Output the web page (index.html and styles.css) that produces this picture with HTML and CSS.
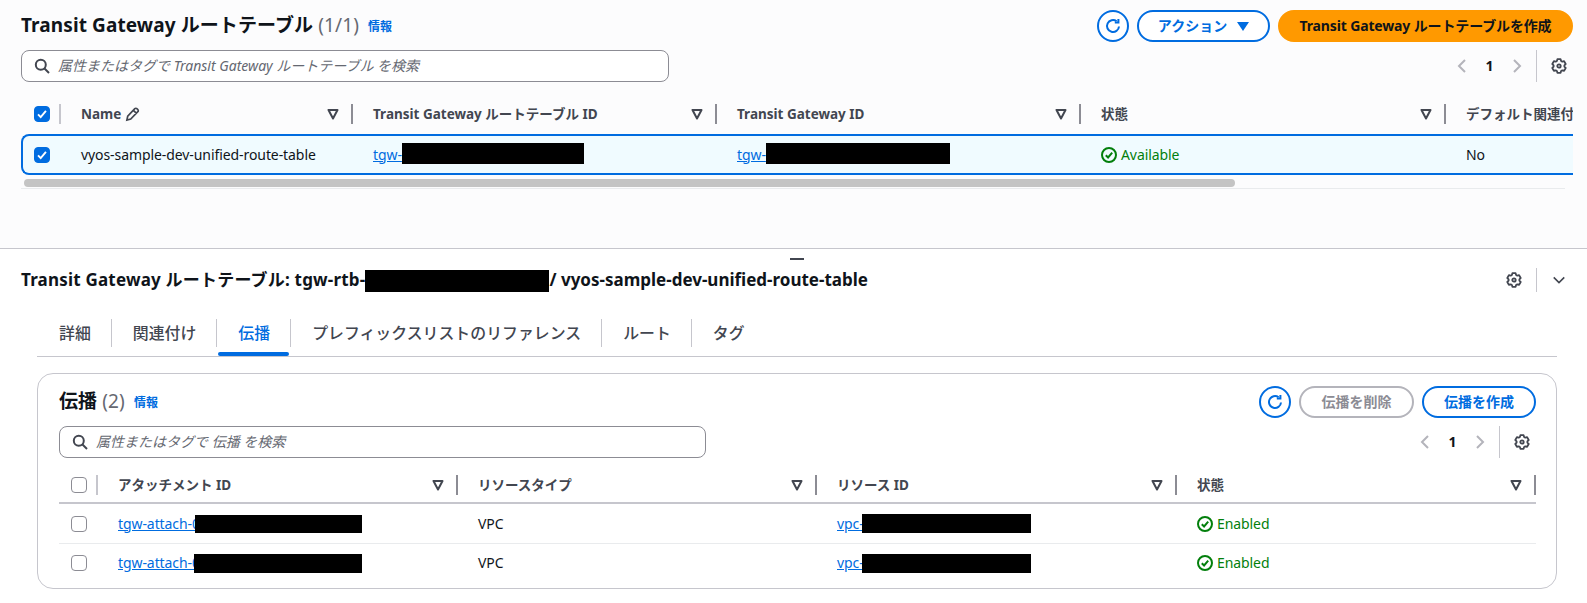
FILE: index.html
```html
<!DOCTYPE html>
<html lang="ja">
<head>
<meta charset="utf-8">
<title>Transit Gateway ルートテーブル</title>
<link rel="stylesheet" href="styles.css">
</head>
<body>
<svg class="defs" width="0" height="0" aria-hidden="true">
  <symbol id="i-refresh" viewBox="0 0 16 16"><path d="M14 8.5A6 6 0 1 1 11.6 3.2" fill="none" stroke="currentColor" stroke-width="2"/><path d="M13.4 .9v3.6H9.8" fill="none" stroke="currentColor" stroke-width="2"/></symbol>
  <symbol id="i-gear" viewBox="0 0 16 16"><path d="M6.4 1.2h3.2l.5 1.8 1.2.7 1.8-.5 1.6 2.8-1.3 1.3v1.4l1.3 1.3-1.6 2.8-1.8-.5-1.2.7-.5 1.8H6.4l-.5-1.8-1.2-.7-1.8.5-1.6-2.8 1.3-1.3V7.3L1.300 6 2.900 3.200l1.800.5 1.200-.7z" fill="none" stroke="currentColor" stroke-width="1.8" stroke-linejoin="round"/><circle cx="8" cy="8" r="1.700" fill="none" stroke="currentColor" stroke-width="1.800"/></symbol>
  <symbol id="i-search" viewBox="0 0 16 16"><circle cx="6.800" cy="6.800" r="5" fill="none" stroke="currentColor" stroke-width="2"/><path d="M10.500 10.500l4.500 4.500" fill="none" stroke="currentColor" stroke-width="2"/></symbol>
  <symbol id="i-filter" viewBox="0 0 12 12"><path d="M1.500 2h9L6 10.500z" fill="none" stroke="currentColor" stroke-width="2" stroke-linejoin="round"/></symbol>
  <symbol id="i-check" viewBox="0 0 16 16"><circle cx="8" cy="8" r="7" fill="none" stroke="currentColor" stroke-width="2"/><path d="M4.800 8.200l2.300 2.300 4.100-4.800" fill="none" stroke="currentColor" stroke-width="2"/></symbol>
  <symbol id="i-pencil" viewBox="0 0 16 16"><path d="M2 14l.9-4.300 7.600-7.900a1.500 1.500 0 0 1 2.200 0l1 1a1.500 1.500 0 0 1 0 2.200l-7.600 7.800zM9 3.500l3.500 3.500" fill="none" stroke="currentColor" stroke-width="1.800"/></symbol>
  <symbol id="i-tick" viewBox="0 0 16 16"><path d="M3.500 8.500l3 3 6-7" fill="none" stroke="currentColor" stroke-width="2.200"/></symbol>
</svg>

<section class="top">
  <div class="head">
    <h1 class="title">Transit Gateway ルートテーブル <span class="count">(1/1)</span> <a class="info">情報</a></h1>
    <div class="actions">
      <button class="btn round"><svg class="ic16"><use href="#i-refresh"/></svg></button>
      <button class="btn action">アクション<span class="caret"></span></button>
      <button class="btn primary">Transit Gateway ルートテーブルを作成</button>
    </div>
  </div>
  <div class="toolbar">
    <div class="search search-top"><svg class="ic16"><use href="#i-search"/></svg><span>属性またはタグで Transit Gateway ルートテーブル を検索</span></div>
    <div class="pager">
      <svg class="chev" viewBox="0 0 10 16"><path d="M8 2L2 8l6 6"/></svg><b>1</b><svg class="chev" viewBox="0 0 10 16"><path d="M2 2l6 6-6 6"/></svg>
      <span class="vsep"></span><svg class="ic16 gear"><use href="#i-gear"/></svg>
    </div>
  </div>
  <div class="clip">
    <div class="grid grid-top ghead">
      <div class="cell"><span class="cb on"><svg><use href="#i-tick"/></svg></span></div>
      <div class="cell th"><span class="name">Name <svg class="ic14"><use href="#i-pencil"/></svg></span><svg class="flt"><use href="#i-filter"/></svg></div>
      <div class="cell th"><span>Transit Gateway ルートテーブル ID</span><svg class="flt"><use href="#i-filter"/></svg></div>
      <div class="cell th"><span>Transit Gateway ID</span><svg class="flt"><use href="#i-filter"/></svg></div>
      <div class="cell th"><span>状態</span><svg class="flt"><use href="#i-filter"/></svg></div>
      <div class="cell th last"><span>デフォルト関連付け</span></div>
    </div>
    <div class="grid grid-sel selrow">
      <div class="cell"><span class="cb on"><svg><use href="#i-tick"/></svg></span></div>
      <div class="cell td">vyos-sample-dev-unified-route-table</div>
      <div class="cell td"><a class="lnk">tgw-</a><span class="mask m-top"></span></div>
      <div class="cell td"><a class="lnk">tgw-</a><span class="mask m-top m-top2"></span></div>
      <div class="cell td ok"><svg class="ic16"><use href="#i-check"/></svg>Available</div>
      <div class="cell td">No</div>
    </div>
  </div>
  <div class="scrolltrack"><div class="thumb"></div></div>
</section>

<section class="bottom">
  <span class="handle"></span>
  <div class="dhead">
    <h2 class="dtitle">Transit Gateway ルートテーブル: tgw-rtb-<span class="mask m-title"></span><span class="dname">/ vyos-sample-dev-unified-route-table</span></h2>
    <div class="dtools"><svg class="ic16 gear"><use href="#i-gear"/></svg><span class="vsep short"></span><svg class="chev dark" viewBox="0 0 16 10"><path d="M2 2l6 6 6-6"/></svg></div>
  </div>
  <nav class="tabs">
    <a class="tab">詳細</a>
    <a class="tab">関連付け</a>
    <a class="tab active">伝播</a>
    <a class="tab">プレフィックスリストのリファレンス</a>
    <a class="tab">ルート</a>
    <a class="tab">タグ</a>
  </nav>
  <div class="card">
    <div class="head card-head">
      <h2 class="title">伝播 <span class="count">(2)</span> <a class="info">情報</a></h2>
      <div class="actions">
        <button class="btn round"><svg class="ic16"><use href="#i-refresh"/></svg></button>
        <button class="btn disabled">伝播を削除</button>
        <button class="btn normal">伝播を作成</button>
      </div>
    </div>
    <div class="toolbar toolbar-card">
      <div class="search search-card"><svg class="ic16"><use href="#i-search"/></svg><span>属性またはタグで 伝播 を検索</span></div>
      <div class="pager">
        <svg class="chev" viewBox="0 0 10 16"><path d="M8 2L2 8l6 6"/></svg><b>1</b><svg class="chev" viewBox="0 0 10 16"><path d="M2 2l6 6-6 6"/></svg>
        <span class="vsep"></span><svg class="ic16 gear"><use href="#i-gear"/></svg>
      </div>
    </div>
    <div class="grid grid-card ghead-card">
      <div class="cell"><span class="cb"></span></div>
      <div class="cell th"><span>アタッチメント ID</span><svg class="flt"><use href="#i-filter"/></svg></div>
      <div class="cell th"><span>リソースタイプ</span><svg class="flt"><use href="#i-filter"/></svg></div>
      <div class="cell th"><span>リソース ID</span><svg class="flt"><use href="#i-filter"/></svg></div>
      <div class="cell th"><span>状態</span><svg class="flt"><use href="#i-filter"/></svg></div>
    </div>
    <div class="grid grid-card row">
      <div class="cell"><span class="cb"></span></div>
      <div class="cell td"><a class="lnk">tgw-attach-0</a><span class="mask m-att"></span></div>
      <div class="cell td">VPC</div>
      <div class="cell td"><a class="lnk">vpc-</a><span class="mask m-vpc"></span></div>
      <div class="cell td ok"><svg class="ic16"><use href="#i-check"/></svg>Enabled</div>
    </div>
    <div class="grid grid-card row rowlast">
      <div class="cell"><span class="cb"></span></div>
      <div class="cell td"><a class="lnk">tgw-attach-0</a><span class="mask m-att m-att2"></span></div>
      <div class="cell td">VPC</div>
      <div class="cell td"><a class="lnk">vpc-</a><span class="mask m-vpc"></span></div>
      <div class="cell td ok"><svg class="ic16"><use href="#i-check"/></svg>Enabled</div>
    </div>
  </div>
</section>
</body>
</html>
```

FILE: styles.css
```css
* { box-sizing: border-box; }
html, body { margin: 0; padding: 0; }
body {
  width: 1587px;
  height: 603px;
  overflow: hidden;
  background: #fff;
  color: #0f141a;
  font-family: "Noto Sans", "Noto Sans CJK JP", sans-serif;
  font-size: 14px;
  line-height: 20px;
}
.defs { position: absolute; }
h1, h2 { margin: 0; }
svg { display: block; flex: none; }
.ic16 { width: 16px; height: 16px; }
.ic14 { width: 15px; height: 15px; display: inline-block; margin-left: 1px; }

.top {
  height: 249px;
  background: #fcfcfd;
  border-bottom: 1px solid #c6c6cd;
  padding: 10px 14px 0 21px;
}
.head { display: flex; justify-content: space-between; align-items: center; height: 32px; }
.title { font-size: 19px; line-height: 24px; font-weight: 700; white-space: nowrap; letter-spacing: .1px; }
.count { font-weight: 400; color: #656871; }
.info { font-size: 12px; font-weight: 700; color: #006ce0; margin-left: 4px; vertical-align: 1px; letter-spacing: 0; }
.actions { display: flex; gap: 8px; }
.btn {
  height: 32px;
  border-radius: 16px;
  border: 2px solid #006ce0;
  background: #fff;
  color: #006ce0;
  font: 700 14px/1 "Noto Sans", "Noto Sans CJK JP", sans-serif;
  padding: 0;
  display: flex;
  align-items: center;
  justify-content: center;
}
.round { width: 32px; }
.action { width: 133px; gap: 10px; }
.caret { width: 0; height: 0; border: 6px solid transparent; border-top: 9px solid #006ce0; border-bottom: 0; }
.primary { width: 295px; background: #ff9900; border-color: #ff9900; color: #0f141a; letter-spacing: -.14px; }
.disabled { width: 115px; border-color: #b4b4bb; color: #8c8c94; }
.normal { width: 114px; }

.toolbar { display: flex; justify-content: space-between; align-items: center; margin-top: 8px; height: 32px; }
.search {
  height: 32px;
  border: 1px solid #8c8c94;
  border-radius: 8px;
  background: #fff;
  display: flex;
  align-items: center;
  gap: 8px;
  padding-left: 12px;
  color: #656871;
  font-style: italic;
  font-size: 14px;
}
.search .ic16 { color: #424650; }
.search-top { width: 648px; }
.search-card { width: 647px; }
.pager { display: flex; align-items: center; height: 32px; padding-right: 6px; color: #0f141a; }
.pager b { font-weight: 700; font-size: 14px; width: 45px; text-align: center; }
.chev { width: 10px; height: 16px; fill: none; stroke: #b4b4bb; stroke-width: 2; }
.chev.dark { width: 14px; height: 10px; stroke: #424650; stroke-width: 1.800; }
.vsep { width: 1px; height: 32px; background: #c6c6cd; margin: 0 14px; }
.vsep.short { height: 24px; margin: 0 15px 0 14px; }
.gear { color: #424650; }

.clip { width: 1552px; overflow: hidden; margin-top: 14px; }
.grid { display: grid; align-items: center; }
.grid-top { grid-template-columns: 40px 292px 364px 364px 365px 127px; }
.grid-sel { grid-template-columns: 38px 292px 364px 364px 365px 127px; }
.cell { display: flex; align-items: center; min-width: 0; white-space: nowrap; }
.cb {
  width: 16px; height: 16px; border-radius: 4px;
  border: 1px solid #8c8c94; background: #fff;
  display: block; margin-left: 12px;
}
.cb.on { background: #006ce0; border-color: #006ce0; color: #fff; margin-left: 13px; }
.cb svg { width: 14px; height: 14px; }
.ghead { height: 38px; padding-bottom: 2px; }
.ghead > .cell:first-child { height: 20px; border-right: 2px solid #c6c6cd; }
.th {
  height: 20px;
  justify-content: space-between;
  padding: 0 12px 0 20px;
  border-right: 2px solid #8c8c94;
  font-size: 13.5px;
  font-weight: 700;
  color: #424650;
}
.th.last { border-right: 0; overflow: hidden; }
.name { display: inline-flex; align-items: center; gap: 3px; }
.flt { width: 12px; height: 12px; color: #424650; }
.selrow {
  height: 41px;
  background: #f0fbff;
  border: 2px solid #006ce0;
  border-right: 0;
  border-radius: 8px 0 0 8px;
}
.selrow .cb { margin-left: 11px; }
.td { padding-left: 20px; color: #0f141a; letter-spacing: -.08px; }
.lnk { color: #006ce0; text-decoration: underline; }
.mask { display: inline-block; background: #000; flex: none; }
.m-top { width: 182px; height: 21px; margin-bottom: 3px; }
.m-top2 { width: 184px; }
.ok { color: #037f0c; gap: 4px; }
.scrolltrack { height: 14px; border-bottom: 1px solid #e9ebed; padding: 4px 0 0 3px; margin-right: 8px; }
.thumb { width: 1211px; height: 8px; border-radius: 4px; background: #c4c4c4; }

.bottom { position: relative; padding: 19px 30px 0 21px; }
.handle { position: absolute; left: 790px; top: 9px; width: 14px; height: 2px; background: #424650; }
.dhead { display: flex; justify-content: space-between; align-items: center; height: 24px; }
.dtitle { font-size: 17px; line-height: 24px; font-weight: 700; white-space: nowrap; letter-spacing: .2px; }
.dname { letter-spacing: 0; }
.m-title { width: 184px; height: 22px; vertical-align: middle; }
.dtools { display: flex; align-items: center; margin-right: -9px; }

.tabs { display: flex; align-items: flex-start; margin: 27px 0 0 16px; height: 38px; border-bottom: 1px solid #c6c6cd; padding-left: 1px; }
.tab {
  height: 28px;
  padding: 0 20px 0 21px;
  display: flex;
  align-items: center;
  border-right: 1px solid #c6c6cd;
  font-size: 15.9px;
  font-weight: 500;
  color: #424650;
  position: relative;
}
.tab:last-child { border-right: 0; }
.tab.active { color: #006ce0; }
.tab.active::after { content: ""; position: absolute; left: 1px; right: 1px; bottom: -9px; height: 4px; border-radius: 2px; background: #006ce0; }

.card {
  margin: 16px 0 0 16px;
  height: 216px;
  border: 1px solid #c6c6cd;
  border-radius: 16px;
  padding: 12px 20px 0 21px;
}
.card-head { height: 32px; }
.toolbar-card { margin-top: 8px; }
.grid-card { grid-template-columns: 39px 360px 359px 360px 359px; }
.ghead-card { height: 46px; padding-top: 10px; border-bottom: 2px solid #c6c6cd; }
.ghead-card .cell { height: 20px; }
.ghead-card .cell:first-child { border-right: 2px solid #c6c6cd; }
.row { height: 40px; border-bottom: 1px solid #e9ebed; }
.rowlast { height: 38px; border-bottom: 0; }
.m-att { width: 167px; height: 18px; margin-left: -5px; }
.m-att2 { width: 168px; height: 19px; margin-left: -6px; }
.m-vpc { width: 169px; height: 19px; margin-left: -2px; }
```
